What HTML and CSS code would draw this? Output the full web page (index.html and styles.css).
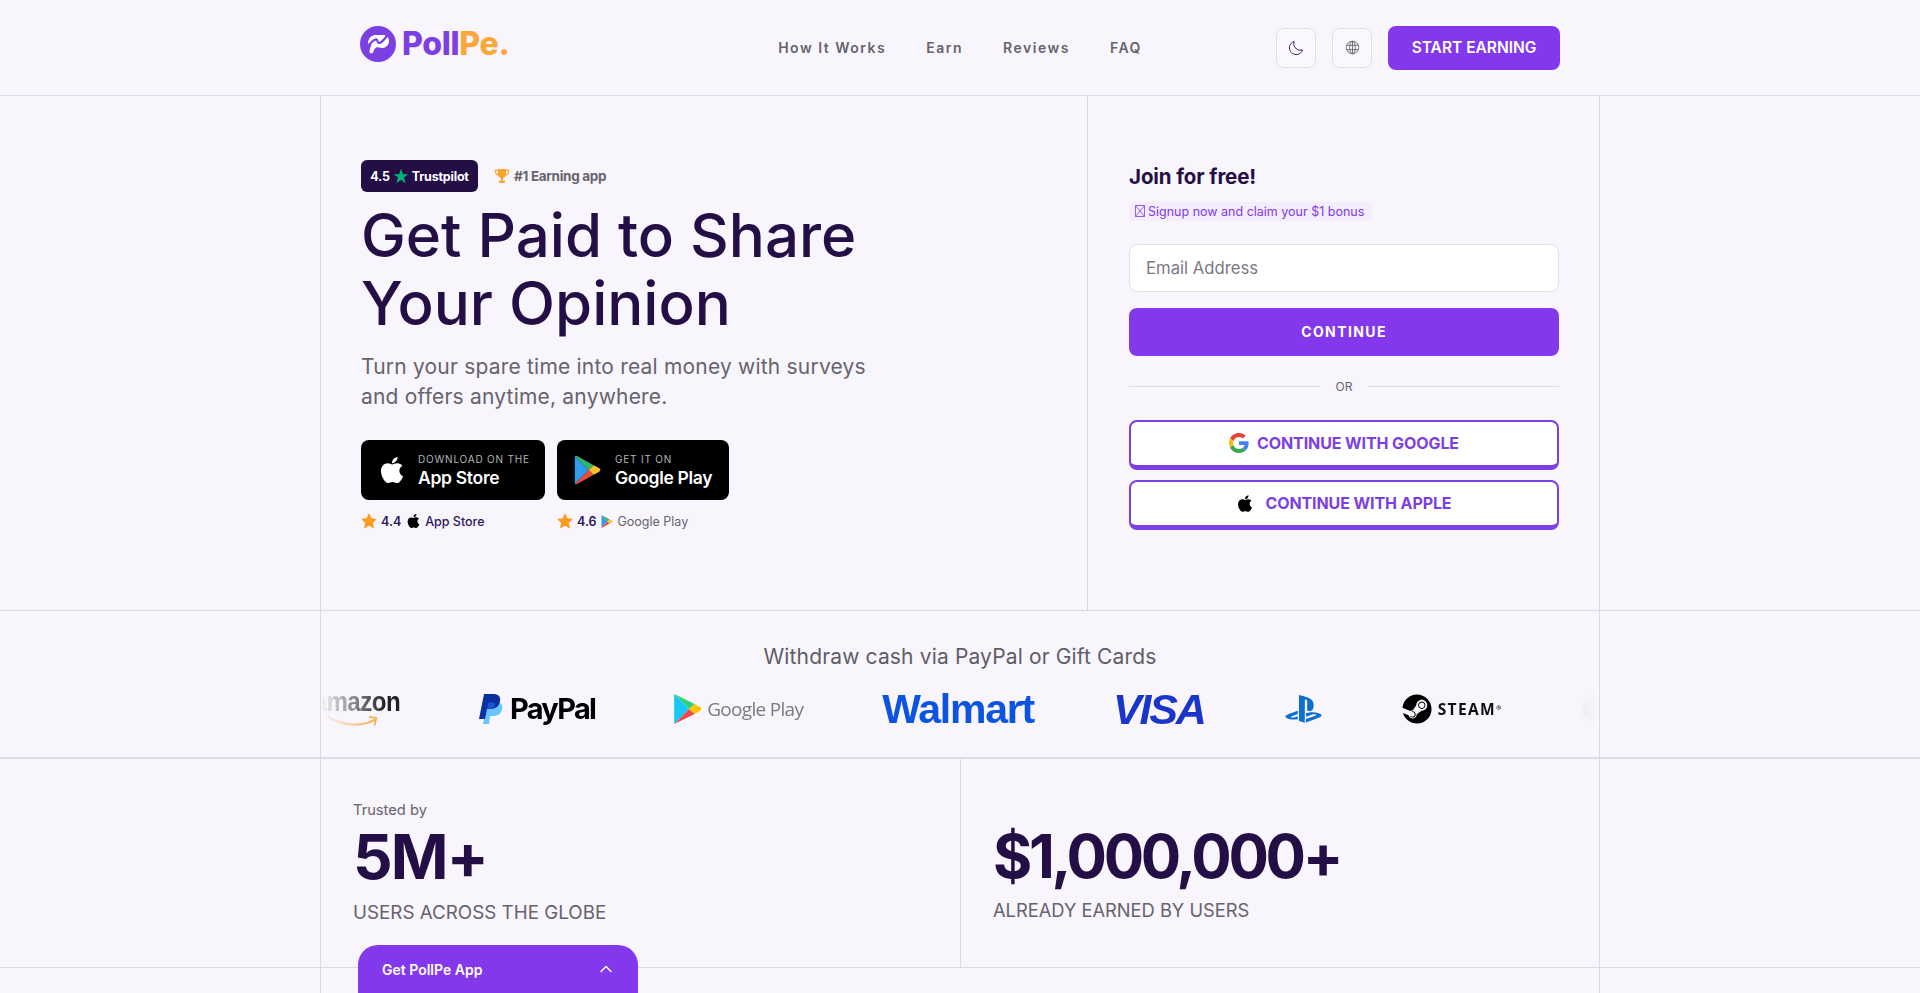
FILE: index.html
```html
<!DOCTYPE html>
<html lang="en">
<head>
<meta charset="utf-8">
<title>PollPe</title>
<link rel="stylesheet" href="styles.css">
</head>
<body>
<svg class="defs" width="0" height="0" aria-hidden="true">
  <defs>
    <symbol id="apple" viewBox="0 0 384 512"><path d="M318.7 268.7c-.2-36.7 16.4-64.4 50-84.8-18.8-26.9-47.2-41.7-84.7-44.6-35.5-2.8-74.3 20.7-88.5 20.7-15 0-49.4-19.7-76.4-19.7C63.3 141.2 4 184.8 4 273.5q0 39.3 14.4 81.2c12.8 36.7 59 126.7 107.2 125.2 25.2-.6 43-17.9 75.8-17.9 31.8 0 48.3 17.9 76.4 17.9 48.6-.7 90.4-82.5 102.6-119.3-65.2-30.7-61.7-90-61.7-91.9zm-56.6-164.2c27.3-32.4 24.8-61.9 24-72.5-24.1 1.4-52 16.4-67.9 34.9-17.5 19.8-27.8 44.3-25.6 71.9 26.1 2 49.9-11.4 69.5-34.3z"/></symbol>
    <symbol id="play" viewBox="0 0 24 27">
      <path fill="#2f9bf0" d="M0.6 1 L0.6 26 L13 13.5 Z"/>
      <path fill="#35b56a" d="M0.6 1 Q1.2 0.2 2.6 0.9 L17.6 9.2 L13 13.5 Z"/>
      <path fill="#ea4b3c" d="M0.6 26 Q1.2 26.8 2.6 26.1 L17.6 17.8 L13 13.5 Z"/>
      <path fill="#fbc02d" d="M17.6 9.2 L22.6 12 Q24.6 13.5 22.6 15 L17.6 17.8 L13 13.5 Z"/>
    </symbol>
    <symbol id="star" viewBox="0 0 24 24"><path d="M12 1.6l3.2 6.9 7.5.9-5.5 5.2 1.4 7.4L12 18.4l-6.6 3.6 1.4-7.4L1.3 9.4l7.5-.9z" stroke="currentColor" stroke-width="1.4" stroke-linejoin="round" fill="currentColor"/></symbol>
  </defs>
</svg>

<header class="site-header">
  <div class="header-inner">
    <a class="logo" href="#">
      <svg class="logo-mark" viewBox="0 0 36 36"><circle cx="18" cy="18" r="18" fill="#7c3fe4"/><path d="M8 16C9 11.500 12 9 16 9L24 9C27.500 10 29.500 12.500 29 16C28 20 25 22 22 22L17.500 21.200C15.500 21.200 14.200 23 13.500 25.500C13 27.800 10 28 9.500 26C10 22 10.500 20 12 18.500C10.500 19.500 8 19 8 16Z" fill="#fff"/><path d="M8.500 20C11 16.500 14 13 16.500 13.500C18 14 17 17 19 17C21 17 24 14 28 8.500" fill="none" stroke="#7c3fe4" stroke-width="2.200" stroke-linecap="round" stroke-linejoin="round"/></svg>
      <span class="logo-text">Poll<em>Pe.</em></span>
    </a>
    <nav class="nav">
      <a href="#">How It Works</a>
      <a href="#">Earn</a>
      <a href="#">Reviews</a>
      <a href="#">FAQ</a>
    </nav>
    <div class="actions">
      <button class="icon-btn" aria-label="Theme"><svg viewBox="0 0 24 24" width="17" height="17" fill="none" stroke="#2a1a4a" stroke-width="1.300"><path d="M20.500 15.500A9.500 9.500 0 0 1 8.500 3.500a9.500 9.500 0 1 0 12 12z" stroke-linejoin="round"/></svg></button>
      <button class="icon-btn" aria-label="Language"><svg viewBox="0 0 24 24" width="15" height="15" fill="none" stroke="#6b6b72" stroke-width="1.500"><circle cx="12" cy="12" r="10"/><ellipse cx="12" cy="12" rx="4.500" ry="10"/><path d="M2.500 8.500h19M2.500 15.500h19M12 2v20"/></svg></button>
      <a class="cta" href="#">START EARNING</a>
    </div>
  </div>
</header>

<section class="band">
  <div class="shell hero">
    <div class="hero-left">
      <div class="badges">
        <span class="tp-badge">4.5 <svg class="tp-star" viewBox="0 0 24 24"><path d="M12 1l2.800 8.300H23l-6.600 5 2.500 8.400L12 17.500l-6.900 5.200 2.500-8.400-6.600-5h8.200z" fill="#00b67a"/></svg> Trustpilot</span>
        <span class="rank"><svg class="trophy" viewBox="0 0 24 24"><path d="M6 1.500h12v8c0 3.500-2.500 6-6 6s-6-2.500-6-6z" fill="#f9a62c"/><path d="M6 3.500H2c0 4 1.500 7 5 7.500M18 3.500h4c0 4-1.500 7-5 7.500" fill="none" stroke="#f9a62c" stroke-width="1.800"/><path d="M10.700 15h2.600v4h-2.600z" fill="#e8912a"/><path d="M7.500 19h9v3.500h-9z" fill="#f9a62c"/></svg>#1 Earning app</span>
      </div>
      <h1>Get Paid to Share<br>Your Opinion</h1>
      <p class="lead">Turn your spare time into real money with surveys and offers anytime, anywhere.</p>
      <div class="stores">
        <div class="store">
          <a class="store-btn store-apple" href="#">
            <svg class="s-apple" fill="#fff"><use href="#apple"/></svg>
            <span class="store-text"><small>DOWNLOAD ON THE</small><b>App Store</b></span>
          </a>
          <div class="rating"><svg class="r-star"><use href="#star"/></svg><b>4.4</b><svg class="r-apple" fill="#000"><use href="#apple"/></svg><span class="dark">App Store</span></div>
        </div>
        <div class="store">
          <a class="store-btn store-play" href="#">
            <svg class="s-play"><use href="#play"/></svg>
            <span class="store-text"><small>GET IT ON</small><b>Google Play</b></span>
          </a>
          <div class="rating"><svg class="r-star"><use href="#star"/></svg><b>4.6</b><svg class="r-play"><use href="#play"/></svg><span>Google Play</span></div>
        </div>
      </div>
    </div>
    <div class="hero-right">
      <h2>Join for free!</h2>
      <p class="chip"><svg class="tofu" viewBox="0 0 10 12" fill="none" stroke="#8338ec" stroke-width=".8"><path d="M.5.5h9v11h-9zM.5.5l9 11M9.500.5l-9 11"/></svg> Signup now and claim your $1 bonus</p>
      <input class="email" type="text" placeholder="Email Address">
      <button class="continue">CONTINUE</button>
      <div class="or"><span>OR</span></div>
      <a class="social" href="#"><svg class="g" viewBox="0 0 48 48"><path fill="#EA4335" d="M24 9.500c3.540 0 6.710 1.220 9.210 3.600l6.850-6.850C35.900 2.380 30.470 0 24 0 14.620 0 6.510 5.380 2.560 13.220l7.980 6.190C12.430 13.720 17.740 9.500 24 9.500z"/><path fill="#4285F4" d="M46.980 24.550c0-1.570-.15-3.090-.38-4.550H24v9.020h12.940c-.58 2.960-2.260 5.480-4.780 7.180l7.730 6c4.510-4.180 7.090-10.360 7.090-17.65z"/><path fill="#FBBC05" d="M10.530 28.590c-.48-1.450-.76-2.990-.76-4.590s.27-3.140.76-4.590l-7.980-6.190C.92 16.460 0 20.120 0 24c0 3.880.92 7.540 2.560 10.780l7.970-6.190z"/><path fill="#34A853" d="M24 48c6.480 0 11.930-2.130 15.890-5.810l-7.730-6c-2.150 1.450-4.920 2.300-8.160 2.300-6.260 0-11.570-4.220-13.470-9.910l-7.980 6.190C6.510 42.620 14.620 48 24 48z"/></svg>CONTINUE WITH GOOGLE</a>
      <a class="social" href="#"><svg class="a" fill="#000"><use href="#apple"/></svg>CONTINUE WITH APPLE</a>
    </div>
  </div>
</section>

<section class="band band-pay">
  <div class="shell pay">
    <h3>Withdraw cash via PayPal or Gift Cards</h3>
    <div class="strip">
      <div class="track">
        <div class="brand amazon"><span>amazon</span><svg viewBox="0 0 62 12" fill="none"><path d="M1 2c16 9 38 10 54 3" stroke="#f5a33a" stroke-width="2.200" stroke-linecap="round"/><path d="M49 2l8 1-2 7" stroke="#f5a33a" stroke-width="2" stroke-linecap="round" stroke-linejoin="round"/></svg></div>
        <div class="brand paypal"><svg viewBox="0 0 24 30"><path fill="#69c3ff" d="M9 8h8c5 0 7 3 6 7-1 5-4 7-9 7h-3l-1 8H4z"/><path fill="#0a2f9e" d="M5 0h9c5 0 8 2.500 7 7-1 6-5 8-10 8H8l-2 10H0z"/><path fill="#1a54d6" d="M9.500 8.500h6c1.500 2.500.5 6-5.500 6.500H8z"/></svg><span>PayPal</span></div>
        <div class="brand gplay"><svg viewBox="0 0 24 27"><path fill="#16c8f8" d="M0 0L0 27L13.500 13.500Z"/><path fill="#2fd27a" d="M0 0L18.500 9L13.500 13.500Z"/><path fill="#ef4a4a" d="M0 27L18.500 18L13.500 13.500Z"/><path fill="#ffc400" d="M18.500 9L26 13.500L18.500 18L13.500 13.500Z"/></svg><span>Google Play</span></div>
        <div class="brand walmart">Walmart</div>
        <div class="brand visa">VISA</div>
        <svg class="brand ps" viewBox="0 0 576 512" fill="#0f6fcf"><path d="M570.900 372.300c-11.300 14.200-38.800 24.300-38.800 24.300L327 470.200v-54.300l150.900-53.800c17.100-6.100 19.800-14.800 5.800-19.400-13.900-4.600-39.100-3.300-56.200 2.900L327 381.100v-56.400c23.200-7.800 47.100-13.600 75.700-16.800 40.900-4.500 90.900.6 130.200 15.500 44.200 14 49.200 34.700 38 48.900zm-224.400-92.500v-139c0-16.300-3-31.300-18.300-35.600-11.700-3.800-19 7.100-19 23.400v347.900l-93.800-29.800V32c39.900 7.400 98 24.900 129.200 35.400C424.100 94.700 451 128.700 451 205.200c0 74.500-46 102.800-104.500 74.600zM43.200 410.200c-45.400-12.800-53-39.500-32.300-54.800 19.100-14.200 51.700-24.900 51.700-24.900l134.500-47.800v54.500l-96.800 34.600c-17.100 6.100-19.700 14.800-5.800 19.400 13.900 4.600 39.100 3.300 56.200-2.900l46.400-16.900v48.800c-51.600 9.300-101.400 7.300-153.900-10z"/></svg>
        <div class="brand steam"><svg viewBox="0 0 496 512"><path d="M496 256c0 137-111.200 248-248.400 248-113.800 0-209.600-76.300-239-180.400l95.200 39.300c6.400 32.100 34.900 56.400 68.900 56.400 39.200 0 71.900-32.400 70.200-73.500l84.500-60.200c52.100 1.300 95.800-40.900 95.800-93.500 0-51.600-42-93.500-93.700-93.500s-93.700 42-93.700 93.500v1.200L176.600 279c-15.500-.9-30.700 3.400-43.500 12.100L0 236.100C10.200 108.400 117.100 8 247.600 8 384.800 8 496 119 496 256zM155.700 384.300l-30.500-12.600a52.790 52.790 0 0 0 27.200 25.800c26.900 11.200 57.800-1.600 69-28.400 5.400-13 5.500-27.300.1-40.300-5.400-13-15.500-23.200-28.500-28.600-12.900-5.400-26.700-5.200-38.900-.6l31.500 13c19.800 8.200 29.200 30.900 20.900 50.700-8.300 19.900-31 29.200-50.800 21zm173.800-129.900c-34.400 0-62.400-28-62.400-62.300s28-62.300 62.400-62.300 62.400 28 62.400 62.300-27.900 62.300-62.400 62.300zm.1-15.600c25.900 0 46.900-21 46.900-46.800 0-25.900-21-46.800-46.900-46.800s-46.900 21-46.900 46.800c.1 25.800 21.100 46.800 46.900 46.800z"/></svg><span>STEAM<sup>®</sup></span></div>
        <div class="brand ghost"></div>
      </div>
    </div>
  </div>
</section>

<section class="band">
  <div class="shell stats">
    <div class="stat stat-users">
      <p class="stat-kicker">Trusted by</p>
      <p class="stat-num">5M+</p>
      <p class="stat-label">USERS ACROSS THE GLOBE</p>
    </div>
    <div class="stat stat-earned">
      <p class="stat-num">$1,000,000+</p>
      <p class="stat-label">ALREADY EARNED BY USERS</p>
    </div>
  </div>
</section>

<div class="shell tail"></div>

<div class="app-tab">
  <span>Get PollPe App</span>
  <svg viewBox="0 0 16 16" width="16" height="16" fill="none" stroke="#fff" stroke-width="1.500" stroke-linecap="round" stroke-linejoin="round"><path d="M3 10.500l5-5 5 5"/></svg>
</div>
</body>
</html>
```

FILE: styles.css
```css
* { box-sizing: border-box; margin: 0; padding: 0; }
html, body { height: 100%; overflow: hidden; }
body {
  background: #f8f5fd;
  color: #240e46;
  font-family: Inter, "Open Sans", sans-serif;
}
a { color: inherit; text-decoration: none; }
.defs { position: absolute; }

.site-header { height: 96px; border-bottom: 1px solid #e1dde9; }
.header-inner {
  width: 1280px; height: 95px; margin: 0 auto; padding: 0 40px;
  display: grid; grid-template-columns: 1fr auto 1fr; align-items: center;
}
.logo { display: flex; align-items: center; gap: 6px; margin-top: -8px; }
.logo-mark { width: 36px; height: 36px; }
.logo-text { font-size: 32px; font-weight: 800; color: #7c3fe4; letter-spacing: -.3px; }
.logo-text em { font-style: normal; color: #fba83a; }
.nav { display: flex; gap: 40px; margin-top: -1px; }
.nav a { font-size: 14px; font-weight: 600; letter-spacing: 1.5px; color: #66636c; }
.actions { display: flex; align-items: center; justify-content: flex-end; gap: 16px; }
.icon-btn {
  width: 40px; height: 40px; border: 1px solid #e2dfe8; border-radius: 8px;
  background: #faf8fd; display: flex; align-items: center; justify-content: center;
}
.cta {
  width: 172px; height: 44px; border-radius: 8px; background: #8338ec; color: #fff;
  font-size: 15.500px; font-weight: 600; display: flex; align-items: center; justify-content: center;
}

.band { border-bottom: 1px solid #dcd9e3; }
.shell { width: 1280px; margin: 0 auto; border-left: 1px solid #dcd9e3; border-right: 1px solid #dcd9e3; }

.hero { display: grid; grid-template-columns: 767px 1fr; height: 514px; }
.hero-left { border-right: 1px solid #dcd9e3; padding: 64px 0 0 40px; }
.badges { display: flex; align-items: center; gap: 16px; }
.tp-badge {
  height: 32px; width: 117px; border-radius: 6px; background: #240e46; color: #fff;
  font-size: 12.500px; font-weight: 700; letter-spacing: -.2px; display: flex; align-items: center; justify-content: center; gap: 3px;
}
.tp-star { width: 16px; height: 16px; }
.rank { display: flex; align-items: center; gap: 4px; font-size: 13.500px; font-weight: 700; color: #66636c; letter-spacing: -.3px; }
.trophy { width: 16px; height: 16px; }
h1 { font-size: 60px; line-height: 68px; font-weight: 500; margin-top: 9px; }
.lead { font-size: 21px; line-height: 30px; color: #66636c; width: 520px; margin-top: 15px; letter-spacing: .2px; }
.stores { display: flex; gap: 12px; margin-top: 28px; }
.store-btn { height: 60px; background: #000; border-radius: 8px; display: flex; align-items: center; color: #fff; }
.store-apple { width: 184px; padding-left: 19px; gap: 14px; }
.store-play { width: 172px; padding-left: 17px; gap: 14px; }
.s-apple { width: 24px; height: 30px; }
.s-play { width: 27px; height: 30px; }
.store-text { display: flex; flex-direction: column; }
.store-text small { font-size: 10px; letter-spacing: .8px; color: #b5b5b5; line-height: 14px; }
.store-text b { font-size: 17.500px; font-weight: 600; line-height: 23px; letter-spacing: -.3px; }
.rating { display: flex; align-items: center; gap: 4px; margin-top: 12px; font-size: 12.500px; color: #66636c; height: 18px; }
.rating b { color: #2a1a5a; font-weight: 600; }
.r-star { width: 16px; height: 16px; color: #fb9a1b; }
.r-apple { width: 13px; height: 16px; margin: 0 1px 0 2px; }
.r-play { width: 12px; height: 13px; margin-right: 1px; }
.dark { color: #2a1a5a; font-weight: 500; }

.hero-right { padding: 66px 40px 0 41px; display: flex; flex-direction: column; }
h2 { font-size: 20.500px; line-height: 30px; font-weight: 700; letter-spacing: -.1px; }
.chip {
  align-self: flex-start; margin: 9.500px 0 0; height: 19px; padding: 0 6px; width: 243px;
  background: #f3edfe; border-radius: 3px; color: #8338ec; font-size: 12.500px; line-height: 19px; white-space: nowrap;
  display: flex; align-items: center; gap: 3px;
}
.tofu { width: 10px; height: 12px; flex: none; }
.email {
  margin-top: 23px; height: 48px; border: 1px solid #e2dfe8; border-radius: 8px; background: #fff;
  padding: 0 16px; font: 16.700px Inter, sans-serif; color: #240e46; outline: none;
}
.email::placeholder { color: #7b7882; }
.continue {
  margin-top: 16px; height: 48px; border: 0; border-radius: 8px; background: #8338ec; color: #fff;
  font: 700 14px Inter, sans-serif; letter-spacing: 1.400px;
}
.or { display: flex; align-items: center; gap: 16px; margin-top: 22px; height: 18px; font-size: 12px; color: #66636c; }
.or::before, .or::after { content: ""; flex: 1; height: 1px; background: #dcd9e3; }
.social {
  height: 50px; margin-top: 10px; border: 2px solid #7c3fe4; border-bottom-width: 5px; border-radius: 8px; background: #fff;
  color: #7c3fe4; font-size: 16px; font-weight: 700; letter-spacing: -.1px;
  display: flex; align-items: center; justify-content: center; gap: 8px;
}
.or + .social { margin-top: 24px; }
.g { width: 20px; height: 20px; }
.a { width: 18px; height: 19px; margin-right: 3px; }

.band-pay { border-bottom: 2px solid #dfdce6; }
.pay { height: 146px; display: flex; flex-direction: column; align-items: center; overflow: hidden; }
h3 { font-size: 21px; font-weight: 400; color: #5f5c66; margin-top: 32px; line-height: 28px; letter-spacing: .15px; }
.strip {
  width: 100%; height: 50px; margin-top: 13px; overflow: hidden;
  -webkit-mask-image: linear-gradient(90deg, transparent 0, #000 64px, #000 calc(100% - 64px), transparent 100%);
  mask-image: linear-gradient(90deg, transparent 0, #000 64px, #000 calc(100% - 64px), transparent 100%);
}
.track { display: flex; align-items: center; margin-left: -11px; gap: 79px; height: 50px; }
.brand { flex: none; }
.amazon { width: 90px; height: 44px; position: relative; font: 700 28px "Liberation Sans", sans-serif; color: #222; line-height: 30px; letter-spacing: -.6px; transform: translateX(-9px) scaleX(.86); transform-origin: right top; }
.amazon svg { position: absolute; left: 16px; top: 28px; width: 62px; height: 12px; }
.paypal { display: flex; align-items: center; gap: 7px; height: 30px; }
.paypal svg { width: 24px; height: 30px; }
.paypal span { font: 700 29px Inter, sans-serif; color: #000; letter-spacing: -1.700px; line-height: 34px; }
.gplay { display: flex; align-items: center; gap: 6px; height: 30px; }
.gplay svg { width: 27px; height: 30px; }
.gplay span { font: 400 19px "Open Sans", sans-serif; color: #7a7a7f; letter-spacing: -.7px; }
.walmart { font: 700 41px "Liberation Sans", sans-serif; color: #0b53e0; line-height: 47px; letter-spacing: -1.200px; }
.visa { font: italic 700 43px "Liberation Sans", sans-serif; color: #1a35c9; line-height: 47px; letter-spacing: -2.200px; }
.ps { width: 39px; height: 32px; }
.steam { display: flex; align-items: center; gap: 6px; height: 30px; }
.steam svg { width: 30px; height: 30px; }
.steam span { font: 700 15.500px "Open Sans", sans-serif; color: #111; letter-spacing: 1.400px; }
.steam sup { font-size: 6px; vertical-align: 5px; letter-spacing: 0; }
.ghost { width: 30px; height: 30px; border-radius: 50%; background: #d9d9d9; border: 3px solid #eee; }

.stats { display: grid; grid-template-columns: 640px 1fr; height: 208px; }
.stat { padding-left: 32px; }
.stat-users { border-right: 1px solid #dcd9e3; padding-top: 41px; }
.stat-earned { padding-top: 63px; padding-left: 32px; }
.stat-kicker { font-size: 14.700px; line-height: 20px; color: #66636c; }
.stat-num { font-size: 62px; line-height: 68px; font-weight: 700; letter-spacing: -1.800px; margin-top: 3px; }
.stat-label { font-size: 18.800px; line-height: 28px; color: #66636c; margin-top: 8px; }
.stat-earned .stat-num { margin-top: 0; font-size: 60px; letter-spacing: -3.300px; }
.stat-earned .stat-label { font-size: 18.300px; margin-top: 6px; }
.tail { height: 40px; }

.app-tab {
  position: fixed; left: 358px; bottom: 0; width: 280px; height: 48px; background: #8338ec; color: #fff;
  border-radius: 20px 20px 0 0; padding: 0 24px; display: flex; align-items: center; justify-content: space-between;
  font-size: 14px; font-weight: 600;
}
```
